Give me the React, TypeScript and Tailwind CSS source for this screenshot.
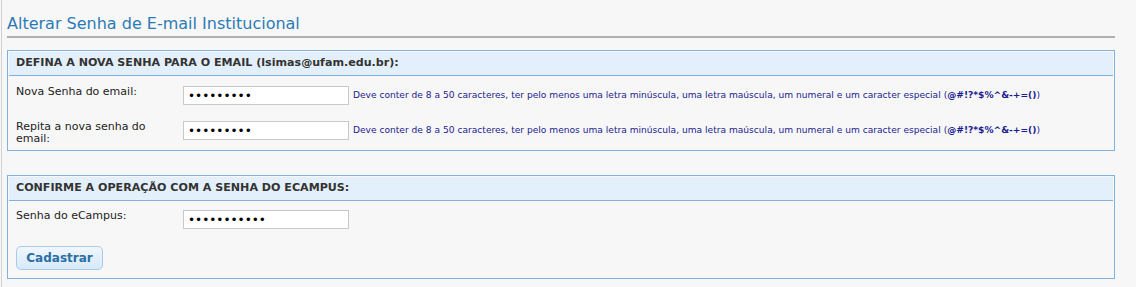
import { useState } from 'react'

const HINT = 'Deve conter de 8 a 50 caracteres, ter pelo menos uma letra minúscula, uma letra maúscula, um numeral e um caracter especial '

function Hint() {
  return (
    <span className="ml-[4px] mt-[3px] text-[9.1px] leading-[12px] text-[#1b1b8f] whitespace-nowrap">
      {HINT}(<b>@#!?*$%^&-+=()</b>)
    </span>
  )
}

function PasswordInput({ value }: { value: string }) {
  const [v, setV] = useState(value)
  return (
    <input
      type="password"
      value={v}
      onChange={(e) => setV(e.target.value)}
      className="w-[166px] h-[19px] shrink-0 border border-[#c8c8c8] bg-white px-[4px] text-[12px] outline-none"
    />
  )
}

function Panel({ title, children }: { title: string; children: React.ReactNode }) {
  return (
    <div className="border border-[#7fb2dc] p-[1px] pb-0">
      <div className="h-[24px] bg-[#e3f0fb] border-b border-[#7fb2dc] pl-[7px] flex items-center text-[11.1px] font-bold text-[#333]">
        {title}
      </div>
      {children}
    </div>
  )
}

export default function App() {
  return (
    <div className="min-h-[287px] bg-[#f7f7f7] pl-[1px] font-['DejaVu_Sans',sans-serif]">
      <div className="min-h-[287px] border-l border-[#d0d0d0] pl-[5px] pr-[21px] pt-[13px]">
        <h1 className="text-[16px] leading-[22px] text-[#2b7bb4] pb-[1px] border-b-2 border-[#b0b0b0]">
          Alterar Senha de E-mail Institucional
        </h1>

        <div className="mt-[12px]">
          <Panel title="DEFINA A NOVA SENHA PARA O EMAIL (lsimas@ufam.edu.br):">
            <div className="pt-[10px] pb-[10px]">
              <div className="flex items-start h-[19px]">
                <label className="w-[174px] pl-[7px] text-[11px] leading-[12px] text-[#222]">Nova Senha do email:</label>
                <PasswordInput value="123456789" />
                <Hint />
              </div>
              <div className="flex items-start h-[19px] mt-[16px]">
                <label className="w-[174px] pl-[7px] pr-[30px] text-[11px] leading-[12px] text-[#222]">Repita a nova senha do email:</label>
                <PasswordInput value="123456789" />
                <Hint />
              </div>
            </div>
          </Panel>
        </div>

        <div className="mt-[24px]">
          <Panel title="CONFIRME A OPERAÇÃO COM A SENHA DO ECAMPUS:">
            <div className="pt-[9px] pb-[8px]">
              <div className="flex items-start h-[19px]">
                <label className="w-[174px] pl-[7px] text-[11px] leading-[12px] text-[#222]">Senha do eCampus:</label>
                <PasswordInput value="12345678901" />
              </div>
              <div className="pl-[7px] mt-[16px]">
                <button className="w-[87px] h-[24px] rounded-[5px] border border-[#a9cbe8] bg-gradient-to-b from-[#f0f7fd] to-[#d6e9f8] text-[12px] font-bold text-[#2c6ea4]">
                  Cadastrar
                </button>
              </div>
            </div>
          </Panel>
        </div>
      </div>
    </div>
  )
}
